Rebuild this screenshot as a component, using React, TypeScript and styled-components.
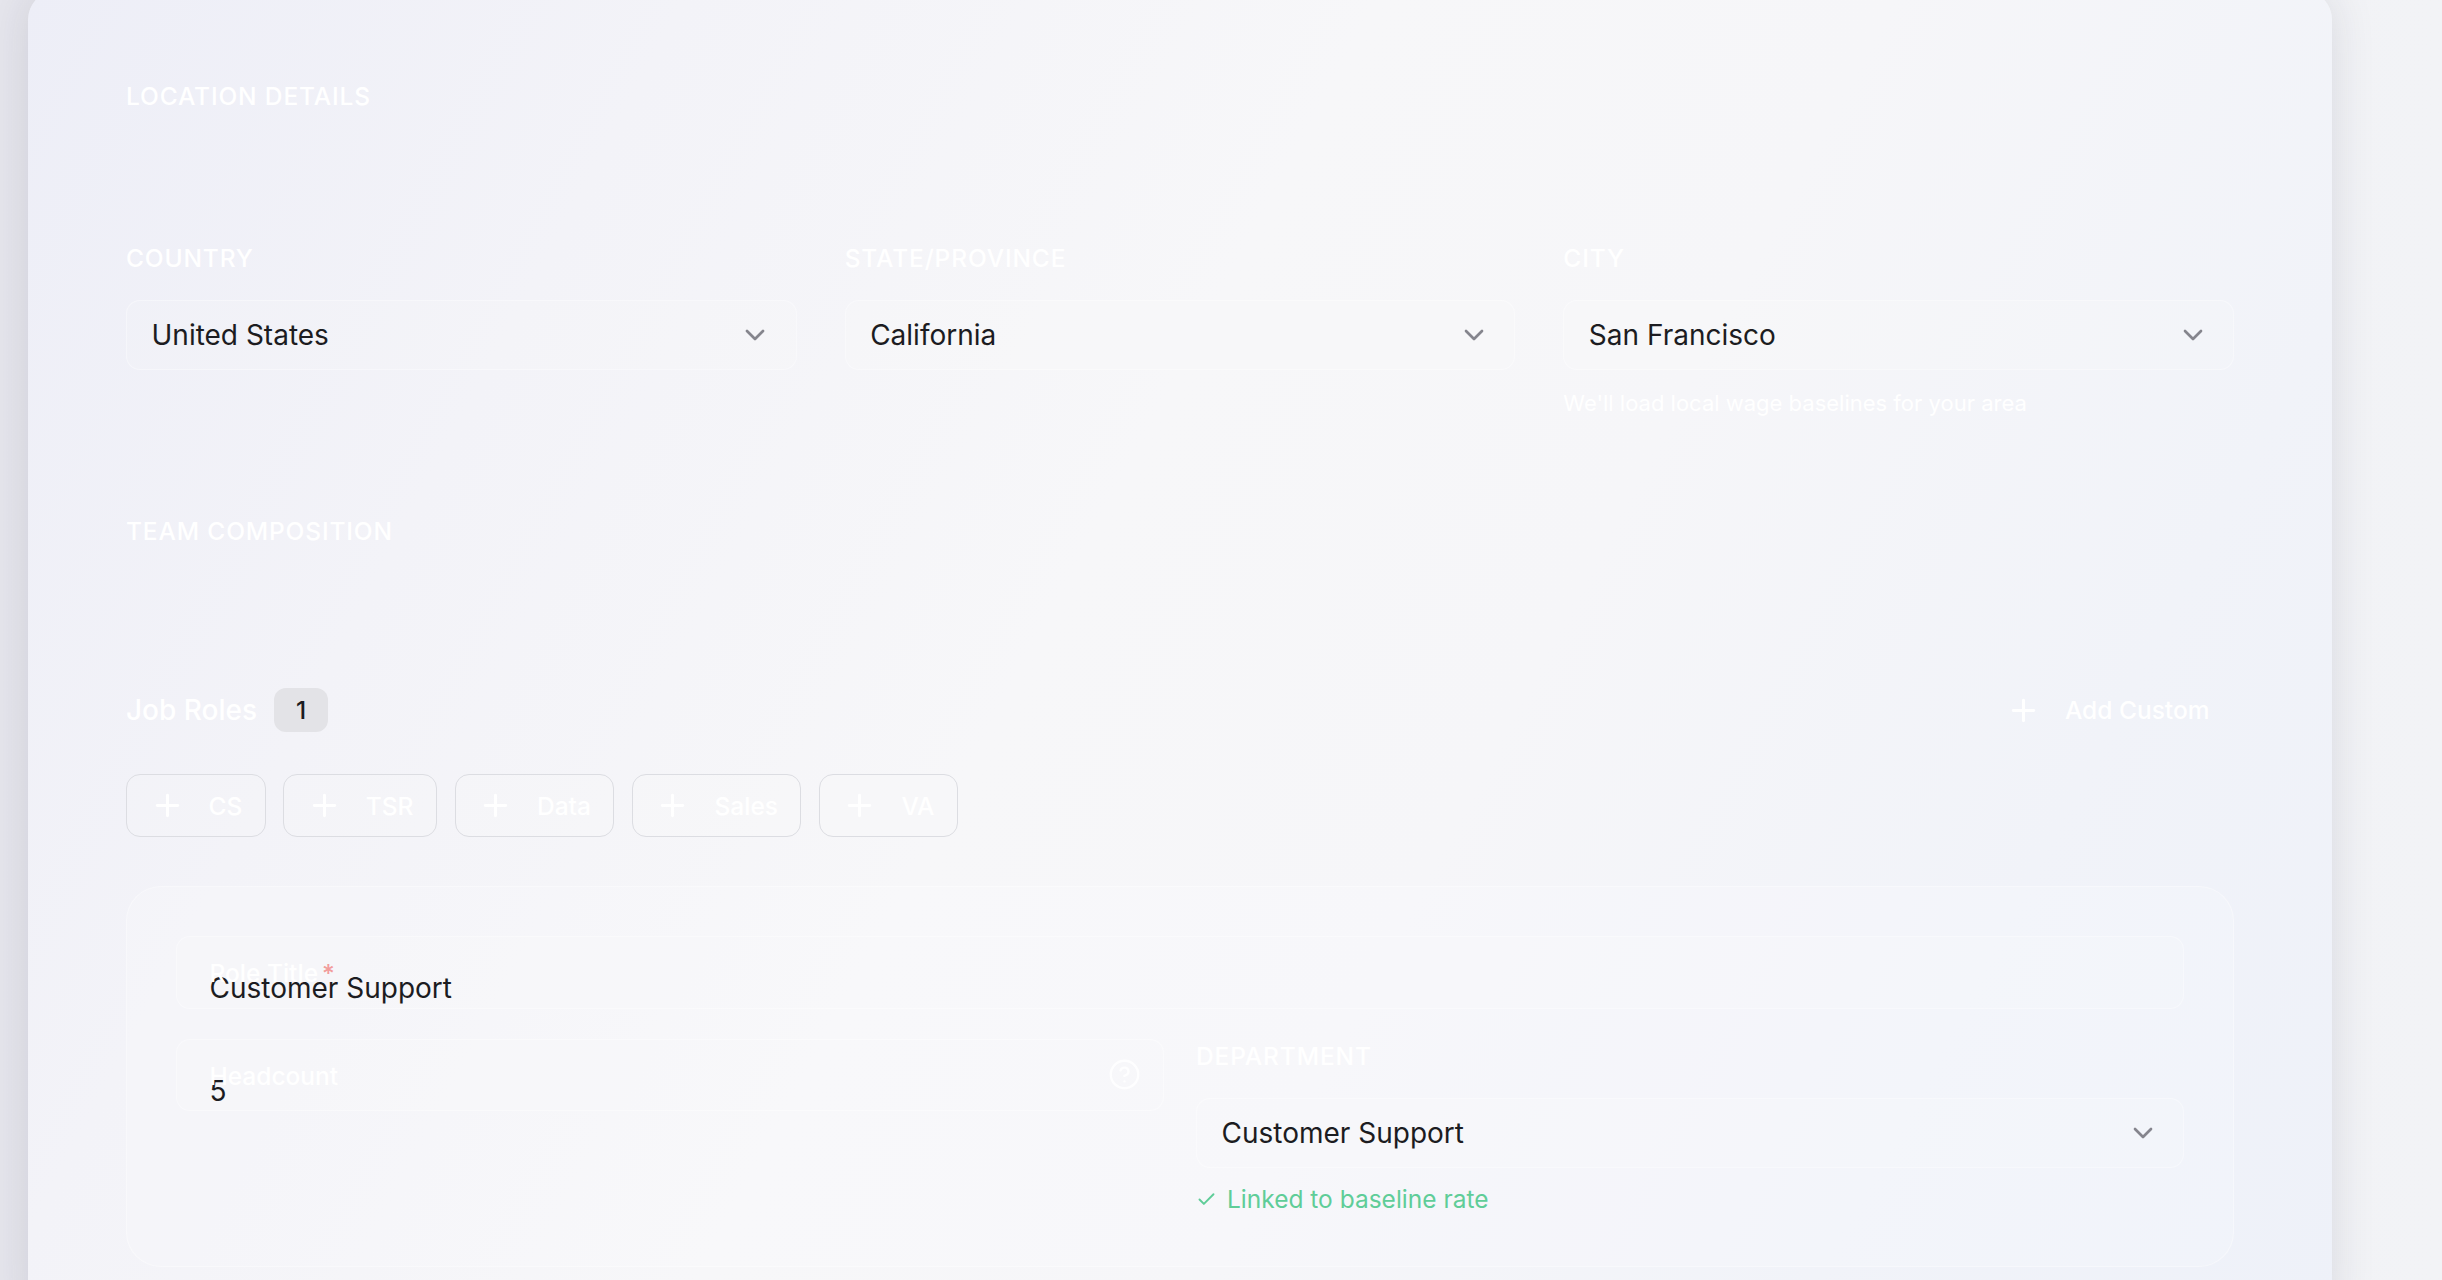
import React from 'react';
import styled, { createGlobalStyle } from 'styled-components';
import { ChevronDown, Plus, Check, CircleHelp } from 'lucide-react';

const GlobalStyle = createGlobalStyle`
  html, body {
    margin: 0;
    padding: 0;
    overflow: hidden;
    height: 100%;
  }
  body {
    background: linear-gradient(90deg, #e6e6ed 0%, #eeeff3 40%, #f2f3f6 100%);
    font-family: Inter, "Noto Sans", "Liberation Sans", sans-serif;
    color: #1c1c21;
  }
  * { box-sizing: border-box; }
`;

const Page = styled.div`
  padding-left: 28px;
`;

const Card = styled.div`
  width: 2304px;
  margin-top: -10px;
  border-radius: 30px;
  background: linear-gradient(118deg, #edeef7 0%, #f3f3f8 22%, #f7f7f9 45%, #f6f6f9 62%, #f1f3f9 82%, #eef1f9 100%);
  box-shadow: 0 0 46px rgba(30, 30, 60, 0.12);
  padding: 89px 98px 60px;
`;

const SectionTitle = styled.h2<{ $gap: number }>`
  margin: 0 0 ${(p) => p.$gap}px;
  font-size: 24.5px;
  line-height: 35px;
  font-weight: 500;
  letter-spacing: 0.035em;
  text-transform: uppercase;
  color: #ffffff;
`;

const FieldGrid = styled.div`
  display: grid;
  grid-template-columns: repeat(3, 1fr);
  gap: 48px;
  align-items: start;
`;

const Field = styled.div`
  display: flex;
  flex-direction: column;
`;

const FieldLabel = styled.label`
  font-size: 24.5px;
  line-height: 35px;
  font-weight: 500;
  letter-spacing: 0.035em;
  text-transform: uppercase;
  color: #ffffff;
  margin-bottom: 24px;
`;

const Select = styled.div`
  height: 70px;
  display: flex;
  align-items: center;
  justify-content: space-between;
  padding: 0 24.5px;
  border: 1.75px solid rgba(255, 255, 255, 0.35);
  border-radius: 14px;
  background: rgba(255, 255, 255, 0.1);
  font-size: 28px;
  color: #1c1c21;

  svg {
    color: #85858d;
    flex-shrink: 0;
  }
`;

const Helper = styled.p`
  margin: 18px 0 0;
  font-size: 22px;
  line-height: 30px;
  color: #ffffff;
`;

const TeamSection = styled.section`
  margin-top: 96px;
`;

const RolesHeader = styled.div`
  height: 44px;
  display: flex;
  align-items: center;
  justify-content: space-between;
`;

const RolesTitle = styled.div`
  display: flex;
  align-items: center;
  gap: 17px;
  font-size: 28px;
  font-weight: 500;
  color: #ffffff;
`;

const Badge = styled.span`
  min-width: 54px;
  height: 44px;
  border-radius: 12px;
  background: #e3e3e7;
  color: #1c1c21;
  font-size: 24.5px;
  font-weight: 500;
  display: inline-flex;
  align-items: center;
  justify-content: center;
`;

const GhostButton = styled.button`
  display: inline-flex;
  align-items: center;
  gap: 24px;
  padding: 0 24.5px;
  height: 44px;
  border: none;
  background: transparent;
  font-family: inherit;
  font-size: 24.5px;
  font-weight: 500;
  color: #ffffff;
`;

const QuickRow = styled.div`
  margin-top: 42px;
  display: flex;
  gap: 17.5px;
`;

const QuickButton = styled.button`
  height: 63px;
  display: inline-flex;
  align-items: center;
  gap: 24px;
  padding: 0 22.5px;
  border: 1.75px solid #dcdde2;
  border-radius: 14px;
  background: rgba(255, 255, 255, 0.1);
  font-family: inherit;
  font-size: 24.5px;
  font-weight: 500;
  color: #ffffff;
`;

const RoleCard = styled.div`
  margin-top: 49px;
  padding: 49px;
  border: 1.75px solid rgba(255, 255, 255, 0.35);
  border-radius: 35px;
  background: rgba(255, 255, 255, 0.16);
`;

const FloatField = styled.div<{ $height: number }>`
  position: relative;
  height: ${(p) => p.$height}px;
  padding: 30px 32.5px 0;
  border: 1.75px solid rgba(255, 255, 255, 0.35);
  border-radius: 14px;
  background: rgba(255, 255, 255, 0.1);
`;

const FloatLabel = styled.span`
  position: absolute;
  top: 24px;
  left: 32.5px;
  font-size: 24.5px;
  line-height: 1;
  font-weight: 500;
  color: #ffffff;

  em {
    font-style: normal;
    color: #f29c9c;
    margin-left: 4px;
  }
`;

const FloatValue = styled.div`
  font-size: 28px;
  line-height: 42px;
  color: #1c1c21;
`;

const HelpIcon = styled.span`
  position: absolute;
  right: 22px;
  top: 18px;
  display: flex;
  color: rgba(255, 255, 255, 0.85);
`;

const RoleGrid = styled.div`
  margin-top: 30px;
  display: grid;
  grid-template-columns: 1fr 1fr;
  gap: 32px;
  align-items: start;
`;

const Linked = styled.div`
  margin-top: 14px;
  display: flex;
  align-items: center;
  gap: 10px;
  font-size: 24.5px;
  line-height: 35px;
  color: #5fcd98;
`;

const quickRoles = ['CS', 'TSR', 'Data', 'Sales', 'VA'];

const locationFields = [
  { label: 'Country', value: 'United States' },
  { label: 'State/Province', value: 'California' },
  { label: 'City', value: 'San Francisco', helper: "We'll load local wage baselines for your area" },
];

export default function App() {
  return (
    <>
      <GlobalStyle />
      <Page>
        <Card>
          <section>
            <SectionTitle $gap={127}>Location Details</SectionTitle>
            <FieldGrid>
              {locationFields.map((f) => (
                <Field key={f.label}>
                  <FieldLabel>{f.label}</FieldLabel>
                  <Select>
                    <span>{f.value}</span>
                    <ChevronDown size={32} strokeWidth={2} />
                  </Select>
                  {f.helper && <Helper>{f.helper}</Helper>}
                </Field>
              ))}
            </FieldGrid>
          </section>

          <TeamSection>
            <SectionTitle $gap={139}>Team Composition</SectionTitle>
            <RolesHeader>
              <RolesTitle>
                Job Roles
                <Badge>1</Badge>
              </RolesTitle>
              <GhostButton>
                <Plus size={35} strokeWidth={2} />
                Add Custom
              </GhostButton>
            </RolesHeader>
            <QuickRow>
              {quickRoles.map((r) => (
                <QuickButton key={r}>
                  <Plus size={35} strokeWidth={2} />
                  {r}
                </QuickButton>
              ))}
            </QuickRow>

            <RoleCard>
              <FloatField $height={73}>
                <FloatLabel>
                  Role Title<em>*</em>
                </FloatLabel>
                <FloatValue>Customer Support</FloatValue>
              </FloatField>
              <RoleGrid>
                <FloatField $height={72}>
                  <FloatLabel>Headcount</FloatLabel>
                  <FloatValue>5</FloatValue>
                  <HelpIcon>
                    <CircleHelp size={33} strokeWidth={1.75} />
                  </HelpIcon>
                </FloatField>
                <Field>
                  <FieldLabel>Department</FieldLabel>
                  <Select>
                    <span>Customer Support</span>
                    <ChevronDown size={32} strokeWidth={2} />
                  </Select>
                  <Linked>
                    <Check size={21} strokeWidth={2.2} />
                    Linked to baseline rate
                  </Linked>
                </Field>
              </RoleGrid>
            </RoleCard>
          </TeamSection>
        </Card>
      </Page>
    </>
  );
}
